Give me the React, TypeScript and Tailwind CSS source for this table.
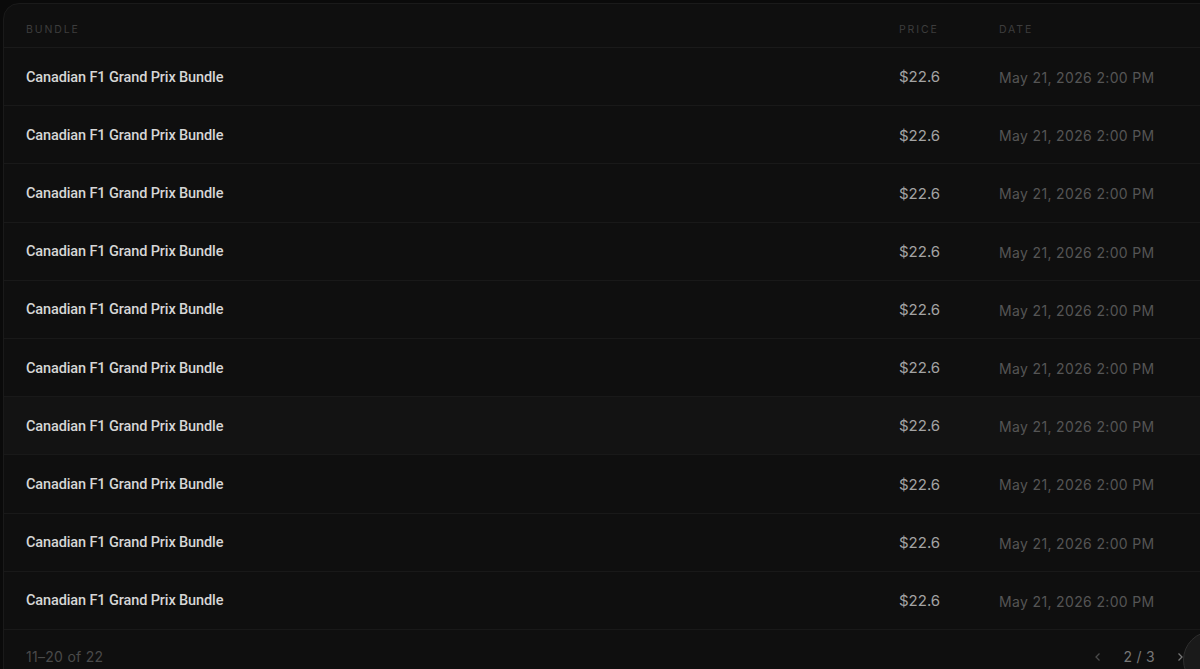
import React from "react";

const rows = Array.from({ length: 10 }, (_, i) => i);

export default function App() {
  return (
    <div className="relative h-[669px] w-[1200px] overflow-hidden bg-[#0a0a0a] pl-[3px] pt-[3px]">
      <div className="flex h-[700px] w-[1220px] flex-col rounded-tl-[16px] border border-[#1a1a1a] bg-[#0f0f0f]">
        <div className="flex h-[44px] shrink-0 items-center border-b border-[#1a1a1a] pl-[22px] pt-[8px] text-[10.5px] uppercase tracking-[0.18em] text-[#3d3d3d]" style={{ fontFamily: "Inter, sans-serif" }}>
          <div className="w-[873px]">Bundle</div>
          <div className="w-[100px]">Price</div>
          <div>Date</div>
        </div>
        {rows.map((i) => (
          <div
            key={i}
            className={`flex h-[58.2px] shrink-0 items-center border-b border-[#191919] pl-[22px] pt-[2px] ${i === 6 ? "bg-[#131313]" : ""}`}
          >
            <div className="w-[873px] text-[14.5px] font-medium tracking-[-0.008em] text-[#d6d6d6]" style={{ fontFamily: "Roboto, sans-serif" }}>
              Canadian F1 Grand Prix Bundle
            </div>
            <div className="w-[100px] text-[15px] text-[#a3a3a3]" style={{ fontFamily: "Inter, sans-serif" }}>$22.6</div>
            <div className="text-[14px] tracking-[0.025em] text-[#555555]" style={{ fontFamily: "Inter, sans-serif" }}>May 21, 2026 2:00 PM</div>
          </div>
        ))}
        <div className="flex h-[52px] shrink-0 items-center justify-between pl-[22px] pr-[36px] pt-[2px] text-[14px]" style={{ fontFamily: "Inter, sans-serif" }}>
          <span className="tracking-[0.02em] text-[#4a4a4a]">11–20 of 22</span>
          <div className="flex items-center gap-[19px] text-[#6a6a6a]">
            <svg width="12" height="12" viewBox="0 0 12 12" fill="none" stroke="#4a4a4a" strokeWidth="1.3"><path d="M7.5 2.5 4 6l3.5 3.5" /></svg>
            <span className="tracking-[0.02em] text-[#777777]">2 / 3</span>
            <svg width="12" height="12" viewBox="0 0 12 12" fill="none" stroke="#777777" strokeWidth="1.3"><path d="M4.5 2.5 8 6l-3.5 3.5" /></svg>
          </div>
        </div>
      </div>
      <div className="absolute left-[1183px] top-[631px] h-[58px] w-[58px] rounded-full border border-[#2e2e2e] bg-[#1a1a1a]" />
    </div>
  );
}
